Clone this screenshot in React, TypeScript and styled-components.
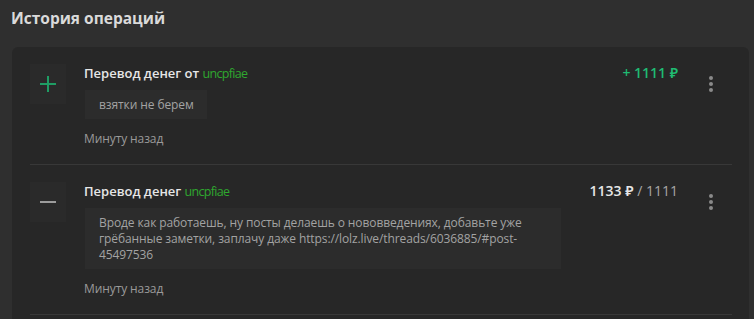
import styled, { createGlobalStyle } from "styled-components";

interface Operation {
	id: number;
	incoming: boolean;
	title: string;
	user: string;
	comment: string;
	amount: string;
	hold?: string;
	time: string;
}

const operations: Operation[] = [
	{
		id: 1,
		incoming: true,
		title: "Перевод денег от",
		user: "uncpfiae",
		comment: "взятки не берем",
		amount: "+ 1111 ₽",
		time: "Минуту назад",
	},
	{
		id: 2,
		incoming: false,
		title: "Перевод денег",
		user: "uncpfiae",
		comment:
			"Вроде как работаешь, ну посты делаешь о нововведениях, добавьте уже грёбанные заметки, заплачу даже https://lolz.live/threads/6036885/#post-45497536",
		amount: "1133 ₽",
		hold: "1111",
		time: "Минуту назад",
	},
];

const GlobalStyle = createGlobalStyle`
	body {
		margin: 0;
		background: #2f2f2f;
		font-family: "Open Sans", "Noto Sans", sans-serif;
	}
`;

const Page = styled.div`
	padding: 7px 5px 0 12px;
	height: 319px;
	box-sizing: border-box;
	overflow: hidden;
`;

const Heading = styled.h1`
	margin: 0 0 18px -1px;
	font-size: 15.5px;
	line-height: 22px;
	font-weight: 700;
	color: #dadada;
`;

const Card = styled.div`
	background: #272727;
	border-radius: 6px 6px 0 0;
	padding: 0 17px 0 18px;
	min-height: 300px;
`;

const Row = styled.div`
	display: flex;
	align-items: flex-start;
	padding: 17px 0 17px;
	border-bottom: 1px solid #383838;
`;

const IconBox = styled.div`
	width: 36px;
	height: 40px;
	flex-shrink: 0;
	display: flex;
	align-items: center;
	justify-content: center;
	background: #2a2a2a;
	margin-right: 18px;
`;

const Body = styled.div`
	flex: 1;
	min-width: 0;
`;

const Title = styled.div`
	font-size: 13px;
	line-height: 18px;
	font-weight: 600;
	color: #e6e6e6;
`;

const User = styled.span`
	font-size: 12.5px;
	font-weight: 400;
	letter-spacing: -0.7px;
	color: #2fa82f;
`;

const Comment = styled.div`
	display: inline-block;
	max-width: 449px;
	margin: 7px 0 0 1px;
	padding: 7px 13px 6px 14px;
	background: #2c2c2c;
	font-size: 12px;
	line-height: 16px;
	letter-spacing: -0.1px;
	color: #a3a3a3;
`;

const Time = styled.div`
	margin-top: 12px;
	font-size: 12px;
	line-height: 16px;
	letter-spacing: -0.1px;
	color: #9a9a9a;
`;

const Amount = styled.div<{ $incoming: boolean }>`
	font-size: 14px;
	line-height: 18px;
	font-weight: 600;
	white-space: nowrap;
	color: ${(p) => (p.$incoming ? "#1fbb72" : "#e6e6e6")};
`;

const Hold = styled.span`
	font-weight: 400;
	color: #a8a8a8;
`;

const Menu = styled.div`
	width: 24px;
	height: 40px;
	margin-left: 21px;
	margin-right: 9px;
	display: flex;
	flex-direction: column;
	align-items: center;
	justify-content: center;
	gap: 2px;
	span {
		width: 4px;
		height: 4px;
		border-radius: 50%;
		background: #8a8a8a;
	}
`;

function Icon({ incoming }: { incoming: boolean }) {
	return (
		<svg width="16" height="16" viewBox="0 0 16 16">
			{incoming && <rect x="7" y="0" width="2" height="16" fill="#1f9d64" />}
			<rect x="0" y="7" width="16" height="2" fill={incoming ? "#1f9d64" : "#9c9c9c"} />
		</svg>
	);
}

export default function App() {
	return (
		<>
			<GlobalStyle />
			<Page>
				<Heading>История операций</Heading>
				<Card>
					{operations.map((op) => (
						<Row key={op.id}>
							<IconBox>
								<Icon incoming={op.incoming} />
							</IconBox>
							<Body>
								<Title>
									{op.title} <User>{op.user}</User>
								</Title>
								<Comment>{op.comment}</Comment>
								<Time>{op.time}</Time>
							</Body>
							<Amount $incoming={op.incoming}>
								{op.amount}
								{op.hold && <Hold> / {op.hold}</Hold>}
							</Amount>
							<Menu>
								<span />
								<span />
								<span />
							</Menu>
						</Row>
					))}
				</Card>
			</Page>
		</>
	);
}
